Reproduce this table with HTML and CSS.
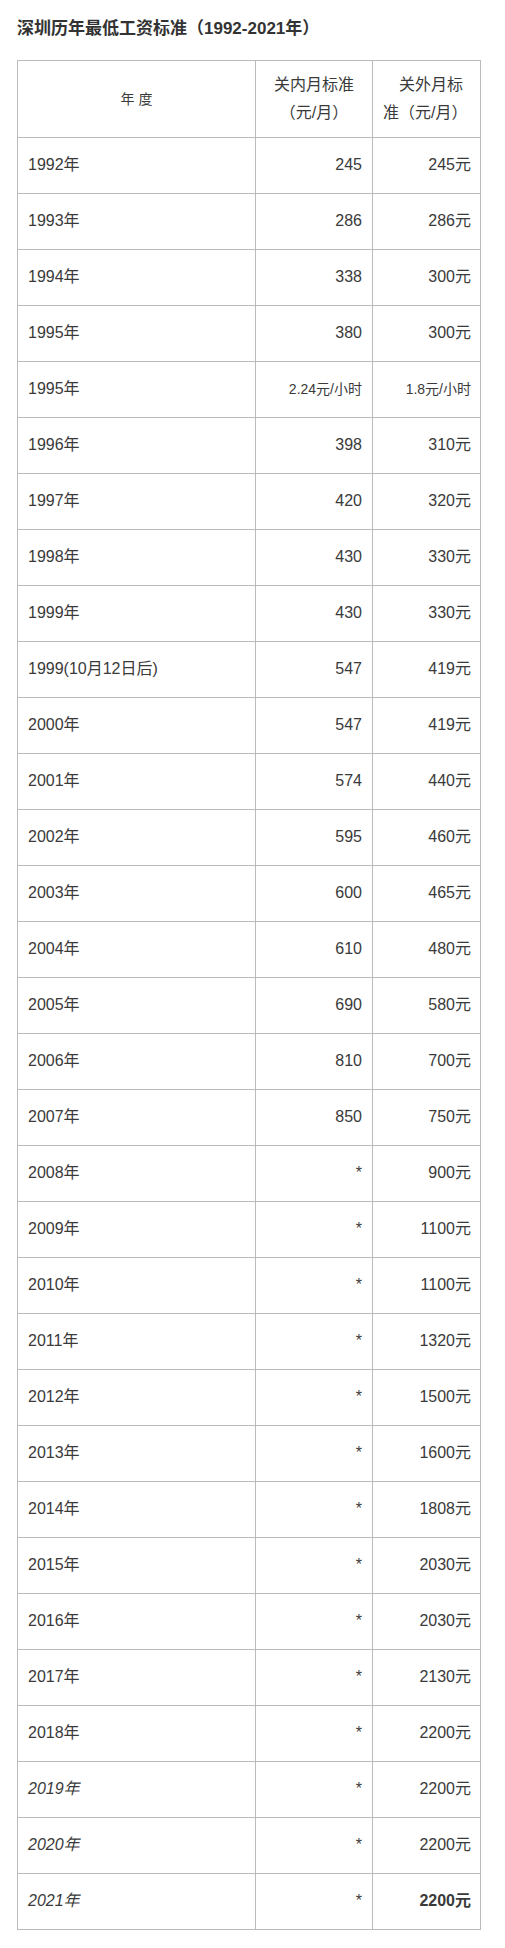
FILE: index.html
```html
<!DOCTYPE html>
<html lang="zh-CN">
<head>
<meta charset="utf-8">
<title>深圳历年最低工资标准</title>
<link rel="stylesheet" href="styles.css">
</head>
<body>
<div class="page">
  <h1 class="title">深圳历年最低工资标准（1992-2021年）</h1>
  <table class="wages">
    <thead>
      <tr>
        <th class="c-year">年 度</th>
        <th class="c-in">关内月标准（元/月）</th>
        <th class="c-out">关外月标准（元/月）</th>
      </tr>
    </thead>
    <tbody>
      <tr><td>1992年</td><td class="num">245</td><td class="num2">245元</td></tr>
      <tr><td>1993年</td><td class="num">286</td><td class="num2">286元</td></tr>
      <tr><td>1994年</td><td class="num">338</td><td class="num2">300元</td></tr>
      <tr><td>1995年</td><td class="num">380</td><td class="num2">300元</td></tr>
      <tr><td>1995年</td><td class="num small">2.24元/小时</td><td class="num2 small">1.8元/小时</td></tr>
      <tr><td>1996年</td><td class="num">398</td><td class="num2">310元</td></tr>
      <tr><td>1997年</td><td class="num">420</td><td class="num2">320元</td></tr>
      <tr><td>1998年</td><td class="num">430</td><td class="num2">330元</td></tr>
      <tr><td>1999年</td><td class="num">430</td><td class="num2">330元</td></tr>
      <tr><td>1999(10月12日后)</td><td class="num">547</td><td class="num2">419元</td></tr>
      <tr><td>2000年</td><td class="num">547</td><td class="num2">419元</td></tr>
      <tr><td>2001年</td><td class="num">574</td><td class="num2">440元</td></tr>
      <tr><td>2002年</td><td class="num">595</td><td class="num2">460元</td></tr>
      <tr><td>2003年</td><td class="num">600</td><td class="num2">465元</td></tr>
      <tr><td>2004年</td><td class="num">610</td><td class="num2">480元</td></tr>
      <tr><td>2005年</td><td class="num">690</td><td class="num2">580元</td></tr>
      <tr><td>2006年</td><td class="num">810</td><td class="num2">700元</td></tr>
      <tr><td>2007年</td><td class="num">850</td><td class="num2">750元</td></tr>
      <tr><td>2008年</td><td class="num">*</td><td class="num2">900元</td></tr>
      <tr><td>2009年</td><td class="num">*</td><td class="num2">1100元</td></tr>
      <tr><td>2010年</td><td class="num">*</td><td class="num2">1100元</td></tr>
      <tr><td>2011年</td><td class="num">*</td><td class="num2">1320元</td></tr>
      <tr><td>2012年</td><td class="num">*</td><td class="num2">1500元</td></tr>
      <tr><td>2013年</td><td class="num">*</td><td class="num2">1600元</td></tr>
      <tr><td>2014年</td><td class="num">*</td><td class="num2">1808元</td></tr>
      <tr><td>2015年</td><td class="num">*</td><td class="num2">2030元</td></tr>
      <tr><td>2016年</td><td class="num">*</td><td class="num2">2030元</td></tr>
      <tr><td>2017年</td><td class="num">*</td><td class="num2">2130元</td></tr>
      <tr><td>2018年</td><td class="num">*</td><td class="num2">2200元</td></tr>
      <tr><td class="it">2019年</td><td class="num">*</td><td class="num2">2200元</td></tr>
      <tr><td class="it">2020年</td><td class="num">*</td><td class="num2">2200元</td></tr>
      <tr><td class="it">2021年</td><td class="num">*</td><td class="num2 strong">2200元</td></tr>
    </tbody>
  </table>
</div>
</body>
</html>
```
FILE: styles.css
```css
html, body {
  margin: 0;
  padding: 0;
  background: #ffffff;
}

.page {
  padding: 17px 0 0 17px;
  font-family: "Liberation Sans", "Noto Sans CJK SC", sans-serif;
  color: #3a3a3a;
}

.title {
  margin: 0 0 19px 0;
  font-size: 17px;
  line-height: 24px;
  font-weight: bold;
  color: #333333;
}

.wages {
  border-collapse: separate;
  border-spacing: 0;
  table-layout: fixed;
  width: 464px;
  border-top: 1px solid #bbbbbb;
  border-left: 1px solid #bbbbbb;
  font-size: 16px;
}

.wages th,
.wages td {
  box-sizing: border-box;
  border-right: 1px solid #bbbbbb;
  border-bottom: 1px solid #bbbbbb;
  padding: 0 10px 2px 10px;
  height: 56px;
  line-height: 20px;
  font-weight: normal;
  vertical-align: middle;
  text-align: left;
  color: #3a3a3a;
}

.wages th {
  height: 77px;
  line-height: 28px;
  padding-bottom: 0;
}

.wages .c-year {
  width: 238px;
  text-align: center;
  font-size: 14px;
}

.wages .c-in {
  width: 117px;
  text-align: center;
}

.wages .c-out {
  width: 108px;
  padding-right: 9px;
  text-indent: 1em;
}

.wages .num {
  text-align: right;
}

.wages .num2 {
  text-align: right;
  padding-right: 9px;
}

.wages .small {
  font-size: 14px;
}

.wages .it {
  font-style: italic;
}

.wages .strong {
  font-weight: bold;
}
```
